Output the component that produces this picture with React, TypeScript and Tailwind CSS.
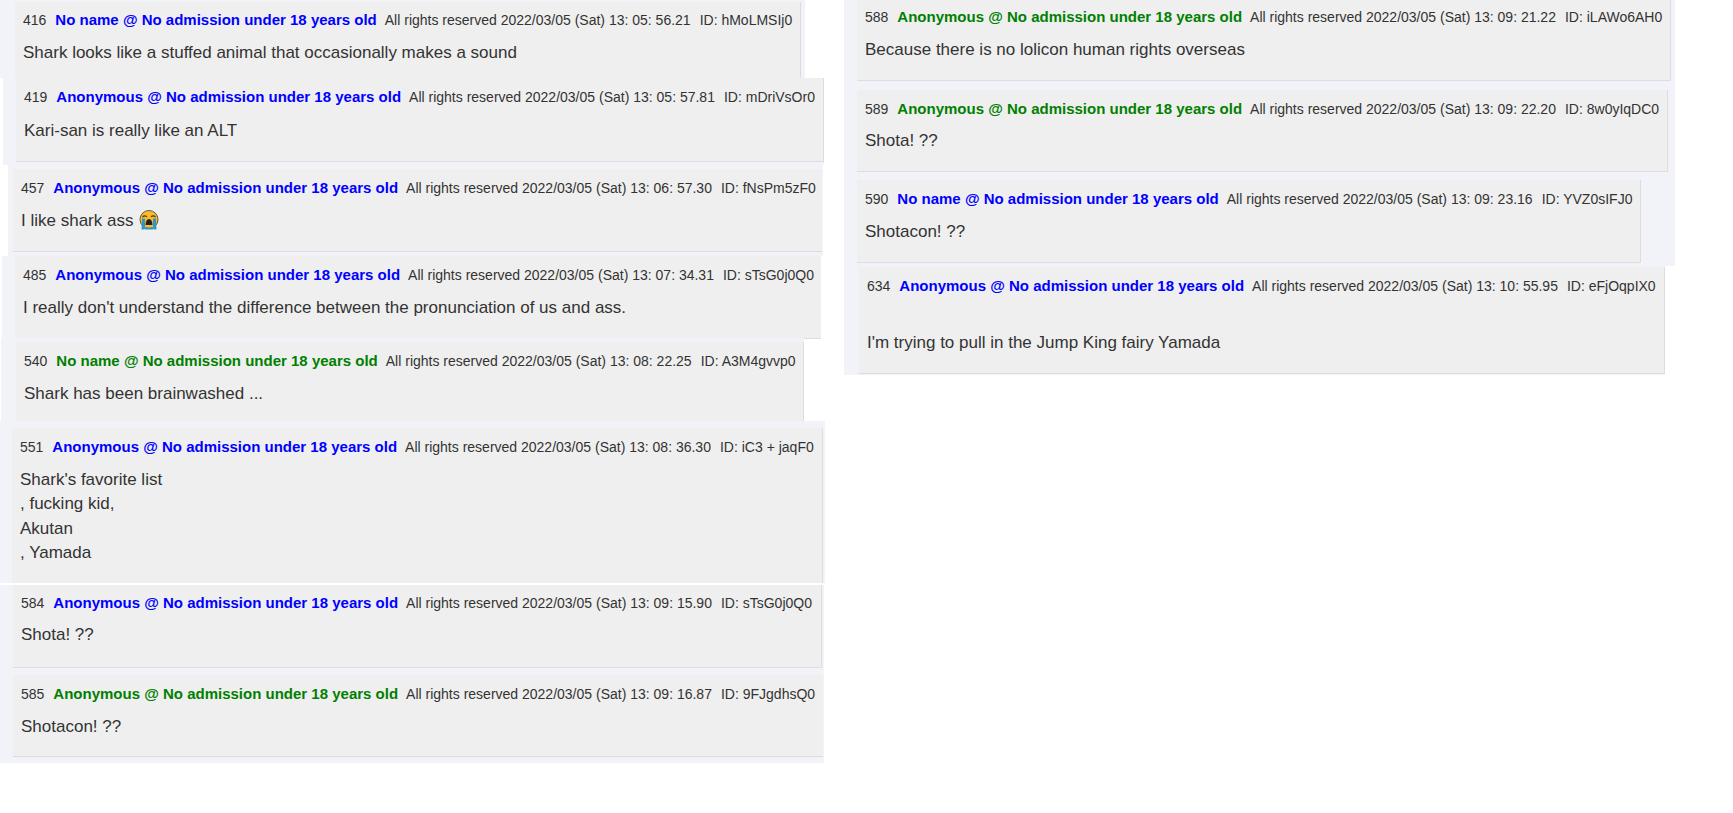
const outer = 'bg-[#f2f3f8]';
const card = 'bg-[#efefef] border-[#dddddd] px-2';
const headerText = 'flex h-[22px] items-center whitespace-pre text-[14px] text-[#333333]';
const msgText = 'text-[17px] leading-[24.33px] text-[#333333]';

type Post = {
  no: number;
  name: string;
  green?: boolean;
  date: string;
  id: string;
  body: React.ReactNode;
  wrap: string;
  cls: string;
  pad?: string;
  gap?: string;
};

function CryingFace() {
  return (
    <svg viewBox="0 0 20 20" className="ml-[1px] inline-block h-[20px] w-[20px] align-[-4px]">
      <circle cx="10" cy="9.5" r="9" fill="#f9bb2a" stroke="#5f5a48" strokeWidth="1" />
      <path d="M3.5 7 Q5.5 5 8 6.8 M12 6.8 Q14.5 5 16.5 7" fill="none" stroke="#4a3a20" strokeWidth="1.2" />
      <path d="M6.5 15 Q6.8 9 10 9 Q13.2 9 13.5 15 Z" fill="#2b2018" />
      <path d="M3 8.5 H6 V18 Q6 19.5 4.5 19.5 H2.5 Z M14 8.5 H17 L17.5 19.5 H15.5 Q14 19.5 14 18 Z" fill="#2f97c6" />
      <path d="M6 17.5 H14 V19.5 H6 Z" fill="#2f97c6" />
    </svg>
  );
}

const left: Post[] = [
  {
    no: 416, name: 'No name', date: '13: 05: 56.21', id: 'hMoLMSIj0',
    body: 'Shark looks like a stuffed animal that occasionally makes a sound',
    wrap: 'w-[805px] pt-[2px] pl-[15px] pr-[4px]',
    cls: 'h-[76px] border-r',
    pad: 'pt-[7px]',
  },
  {
    no: 419, name: 'Anonymous', date: '13: 05: 57.81', id: 'mDriVsOr0',
    body: 'Kari-san is really like an ALT',
    wrap: 'ml-[3px] w-[821px] pl-[13px] pb-[3px]',
    cls: 'h-[84px] border-r border-b',
    gap: 'mt-[11px]',
  },
  {
    no: 457, name: 'Anonymous', date: '13: 06: 57.30', id: 'fNsPm5zF0',
    body: <>I like shark ass <CryingFace /></>,
    wrap: 'ml-[8px] w-[815px] pt-[4px] pl-[5px] pr-[1px] pb-[4px]',
    cls: 'h-[83px] border-b',
  },
  {
    no: 485, name: 'Anonymous', date: '13: 07: 34.31', id: 'sTsG0j0Q0',
    body: "I really don't understand the difference between the pronunciation of us and ass.",
    wrap: 'ml-[2px] w-[819px] pl-[13px]',
    cls: 'h-[83px] border-b',
  },
  {
    no: 540, name: 'No name', green: true, date: '13: 08: 22.25', id: 'A3M4gvvp0',
    body: 'Shark has been brainwashed ...',
    wrap: 'relative -mt-[1px] ml-[1px] w-[803px] pt-[4px] pl-[15px]',
    cls: 'h-[79px] border-r',
  },
  {
    no: 551, name: 'Anonymous', date: '13: 08: 36.30', id: 'iC3 + jaqF0',
    body: <>Shark's favorite list<br />, fucking kid,<br />Akutan<br />, Yamada</>,
    wrap: 'mb-[2px] w-[825px] pt-[7px] pl-[12px] pr-[2px]',
    cls: 'h-[155px] border-r',
  },
  {
    no: 584, name: 'Anonymous', date: '13: 09: 15.90', id: 'sTsG0j0Q0',
    body: 'Shota! ??',
    wrap: 'w-[824px] pl-[13px] pr-[2px] pb-[3px]',
    cls: 'h-[83px] border-r border-b',
    pad: 'pt-[7px]',
    gap: 'mt-[9px]',
  },
  {
    no: 585, name: 'Anonymous', green: true, date: '13: 09: 16.87', id: '9FJgdhsQ0',
    body: 'Shotacon! ??',
    wrap: 'w-[824px] pt-[4px] pl-[13px] pr-[1px] pb-[6px]',
    cls: 'h-[82px] border-b',
  },
];

const right: Post[] = [
  {
    no: 588, name: 'Anonymous', green: true, date: '13: 09: 21.22', id: 'iLAWo6AH0',
    body: 'Because there is no lolicon human rights overseas',
    wrap: 'pl-[13px] pr-[4px]',
    cls: '-mt-[1px] h-[82px] border-r border-b',
    pad: 'pt-[7px]',
  },
  {
    no: 589, name: 'Anonymous', green: true, date: '13: 09: 22.20', id: '8w0yIqDC0',
    body: 'Shota! ??',
    wrap: 'mt-[9px] pl-[13px] pr-[7px]',
    cls: 'h-[82px] border-r border-b',
    gap: 'mt-[9px]',
  },
  {
    no: 590, name: 'No name', date: '13: 09: 23.16', id: 'YVZ0sIFJ0',
    body: 'Shotacon! ??',
    wrap: 'mt-[8px] pl-[13px] pr-[34px] pb-[3px]',
    cls: 'h-[83px] border-r border-b',
  },
];

function Header({ no, name, green, date, id }: { no: number; name: string; green?: boolean; date: string; id: string }) {
  return (
    <div className={headerText}>
      <span>{no}</span>
      <span className={green ? 'ml-[9px] text-[15px] font-bold text-[#008000]' : 'ml-[9px] text-[15px] font-bold text-[#0000ff]'}>
        {name} @ No admission under 18 years old
      </span>
      <span className="ml-[8px]">All rights reserved 2022/03/05 (Sat) {date}</span>
      <span className="ml-[9px]">ID: {id}</span>
    </div>
  );
}

function Row({ post }: { post: Post }) {
  return (
    <div className={`${card} ${post.cls}`}>
      <div className={post.pad ?? 'pt-[8px]'}>
        <Header no={post.no} name={post.name} green={post.green} date={post.date} id={post.id} />
        <div className={`${post.gap ?? 'mt-[10px]'} ${msgText}`}>{post.body}</div>
      </div>
    </div>
  );
}

export default function App() {
  return (
    <div className="flex h-[813px] bg-white font-['Liberation_Sans',Arial,sans-serif]">
      <div className="w-[844px] shrink-0">
        {left.map(post => (
          <div key={post.no} className={`${outer} ${post.wrap}`}>
            <Row post={post} />
          </div>
        ))}
      </div>
      <div className="w-[831px] shrink-0">
        <div className={`${outer} h-[266px] overflow-hidden`}>
          {right.map(post => (
            <div key={post.no} className={post.wrap}>
              <Row post={post} />
            </div>
          ))}
        </div>
        <div className={`${outer} w-[821px] pt-[1px] pl-[15px] pb-[1px]`}>
          <div className={`${card} h-[107px] border-r border-b`}>
            <div className="pt-[8px]">
              <Header no={634} name="Anonymous" date="13: 10: 55.95" id="eFjOqpIX0" />
              <div className={`mt-[10px] ${msgText}`}>
                <br />
                I'm trying to pull in the Jump King fairy Yamada
              </div>
            </div>
          </div>
        </div>
      </div>
    </div>
  );
}
